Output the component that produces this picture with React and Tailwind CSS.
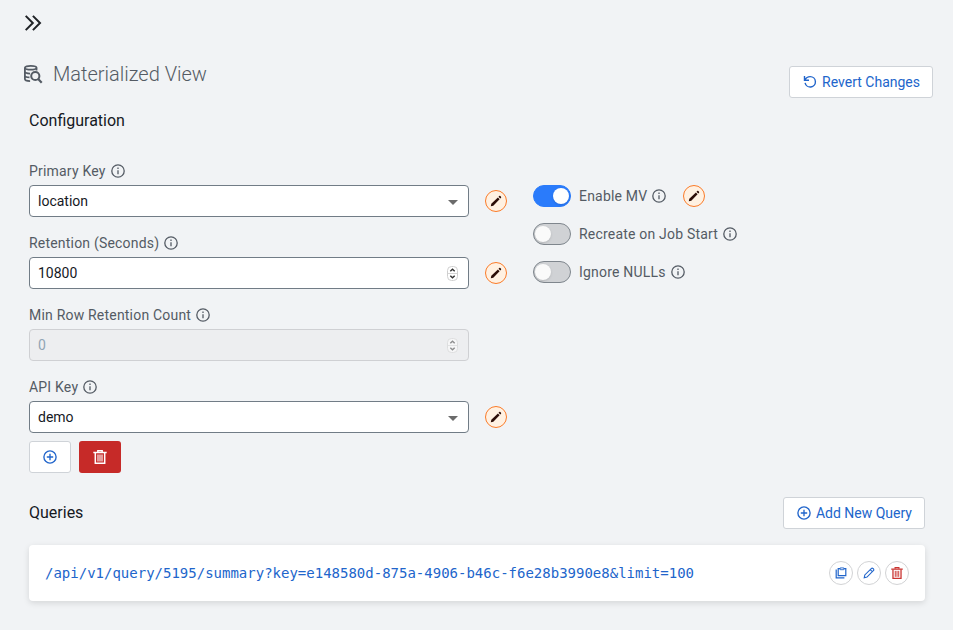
import React from "react";

function InfoIcon() {
  return (
    <svg width="14" height="14" viewBox="0 0 14 14" fill="none" stroke="#545b64" className="shrink-0">
      <circle cx="7" cy="7" r="6.2" strokeWidth="1.3" />
      <path d="M7 6.2v4M7 3.6v1.4" strokeWidth="1.3" />
    </svg>
  );
}

function Label({ children }) {
  return (
    <div className="flex h-5 items-center gap-[5px] text-sm leading-5 tracking-[0.2px] text-[#545b64]">
      <span>{children}</span>
      <InfoIcon />
    </div>
  );
}

function EditBadge() {
  return (
    <button className="flex size-[22px] shrink-0 items-center justify-center rounded-full border border-[#fb7b28] bg-[#fff1e2]">
      <svg width="12" height="12" viewBox="0 0 12 12" fill="#2b0d08">
        <path d="M.8 11.2l.5-2.5 6.6-6.2 1.7 1.7-6.3 6.5zM8.5 1.8l.8-.9c.8-.5 2.3.9 1.8 1.8l-.9.8z" />
      </svg>
    </button>
  );
}

function Caret() {
  return (
    <svg width="10" height="5" viewBox="0 0 10 5" fill="#6b6b6b" className="mt-0.5">
      <path d="M0 0h10L5 5z" />
    </svg>
  );
}

function Spinner({ muted }) {
  return (
    <svg width="11" height="15" viewBox="0 0 11 15" fill="none" className={muted ? "opacity-50" : ""}>
      <rect x=".5" y=".5" width="10" height="14" rx="4" fill="#fff" stroke="#cfcfcf" />
      <path d="M1 7.5h9" stroke="#d5d5d5" />
      <path d="M3.3 5.3l2.2-2.1 2.2 2.1M3.3 9.7l2.2 2.1 2.2-2.1" stroke="#333" strokeWidth="1.4" />
    </svg>
  );
}

function Field({ label, value, kind, disabled, edit }) {
  return (
    <div className="h-[72px]">
      <Label>{label}</Label>
      <div className="mt-1 flex items-center gap-4">
        <div
          className={
            "flex h-8 w-[440px] items-center justify-between rounded-[4px] border pr-[10px] pl-2 text-sm " +
            (disabled ? "border-[#cfd0d3] bg-[#edeef0] text-[#91a5b5]" : "border-[#717c86] bg-white text-[#16191f]")
          }
        >
          <span>{value}</span>
          {kind === "number" ? <Spinner muted={disabled} /> : <Caret />}
        </div>
        {edit && <EditBadge />}
      </div>
    </div>
  );
}

function Toggle({ label, on, edit }) {
  return (
    <div className="flex h-[22px] items-center">
      <div
        className={
          "mr-2 flex h-[22px] w-[38px] items-center rounded-full border " +
          (on ? "justify-end border-[#2a7bfb] bg-[#2a7bfb] pr-px" : "border-[#7f868d] bg-[#d0d2d5] pl-px")
        }
      >
        <span className={"size-4 rounded-full shadow-sm " + (on ? "bg-white" : "bg-[#fafafa]")} />
      </div>
      <Label>{label}</Label>
      {edit && (
        <div className="ml-[17px]">
          <EditBadge />
        </div>
      )}
    </div>
  );
}

function PlusCircle() {
  return (
    <svg width="14" height="14" viewBox="0 0 14 14" fill="none" stroke="#2165cb" strokeWidth="1.35">
      <circle cx="7" cy="7" r="6.1" />
      <path d="M7 3.8v6.4M3.8 7h6.4" />
    </svg>
  );
}

function Trash({ className }) {
  return (
    <svg width="14" height="14" viewBox="0 0 14 14" fill="none" stroke="currentColor" className={className}>
      <path d="M.3 2.5h13.4" strokeWidth="1.5" />
      <path d="M4.8 2V.8h4.4V2" strokeWidth="1.4" />
      <path d="M2.3 3v10.3h9.4V3" strokeWidth="1.5" />
      <path d="M5 4.5v7M7 4.5v7M9 4.5v7" strokeWidth="1.1" />
    </svg>
  );
}

const outlined = "flex h-8 items-center rounded-[3px] border border-[#cfd3d8] bg-white text-sm text-[#2165cb]";
const round = "flex size-6 items-center justify-center rounded-full border border-[#d2d3d5] bg-white";

export default function App() {
  return (
    <main className="h-[630px] w-[953px] overflow-hidden bg-[#f1f3f5] font-['Roboto',sans-serif] text-[#16191f]">
      <div className="h-[47px] pt-[15px] pl-[25px]">
        <svg width="17" height="16" viewBox="0 0 17 16" fill="none" stroke="#1f2226" strokeWidth="2">
          <path d="M.7.9L7.8 8 .7 15.1M7.9.9L15 8l-7.1 7.1" />
        </svg>
      </div>

      <header className="flex h-[59px] justify-between pr-5 pl-6">
        <div className="flex h-[54px] items-center">
          <svg width="19" height="19" viewBox="0 0 19 19" fill="none" stroke="#545b64" strokeWidth="1.8">
            <ellipse cx="6.7" cy="2.8" rx="5.8" ry="1.9" />
            <path d="M.9 2.8v11.3c0 1.2 2.3 2 5.2 2M12.5 2.8v2.7M.9 6.6c0 1 1.8 1.9 5.2 2M.9 10.4c0 .9 1.8 1.8 4.6 1.9" />
            <circle cx="11.3" cy="11" r="4.1" strokeWidth="2" />
            <path d="M14.2 14.1l3.5 3.6" strokeWidth="2.2" />
          </svg>
          <h1 className="ml-[10px] text-xl font-light text-[#545b64]">Materialized View</h1>
        </div>
        <button className={outlined + " mt-[19px] pr-3 pl-[13px]"}>
          <svg width="14" height="14" viewBox="0 0 14 14" fill="none" stroke="#2165cb" strokeWidth="1.4" className="mr-[5px]">
            <path d="M1.5 1v4.3H6M1.8 5C3 2.8 5 1.6 7.2 1.6a5.2 5.2 0 1 1-5.1 6.2" />
          </svg>
          Revert Changes
        </button>
      </header>

      <h2 className="mt-[3px] ml-[29px] text-base leading-6">Configuration</h2>

      <section className="mt-7 ml-[29px] flex h-[280px]">
        <div className="w-[504px]">
          <Field label="Primary Key" value="location" edit />
          <Field label="Retention (Seconds)" value="10800" kind="number" edit />
          <Field label="Min Row Retention Count" value="0" kind="number" disabled />
          <Field label="API Key" value="demo" edit />
        </div>
        <div className="flex flex-col gap-4 pt-6">
          <Toggle label="Enable MV" on edit />
          <Toggle label="Recreate on Job Start" />
          <Toggle label="Ignore NULLs" />
        </div>
      </section>

      <div className="ml-[29px] flex gap-2">
        <button className={outlined + " w-[42px] justify-center"}>
          <PlusCircle />
        </button>
        <button className="flex h-8 w-[42px] items-center justify-center rounded-[3px] bg-[#c62a28] text-white">
          <Trash />
        </button>
      </div>

      <div className="mt-6 mr-7 ml-[29px] flex h-8 items-center justify-between">
        <h2 className="text-base leading-6">Queries</h2>
        <button className={outlined + " gap-[5px] pr-3 pl-[13px]"}>
          <PlusCircle />
          Add New Query
        </button>
      </div>

      <div className="mt-4 mr-7 ml-[29px] flex h-14 items-center justify-between rounded-[4px] bg-white px-4 shadow-[0_2px_6px_rgba(0,0,0,0.12)]">
        <span className="font-['DejaVu_Sans_Mono',monospace] text-sm text-[#2165cb]">
          /api/v1/query/5195/summary?key=e148580d-875a-4906-b46c-f6e28b3990e8&amp;limit=100
        </span>
        <div className="flex gap-1">
          <button className={round}>
            <svg width="12" height="12" viewBox="0 0 12 12" fill="none" stroke="#2165cb" strokeWidth="1.2">
              <path d="M5 1.6H3.2v7h7.6v-7H9" />
              <path d="M5.2.9h3.6v1.8H5.2z" strokeWidth=".9" />
              <path d="M1.2 2.6v8.2h8.2" />
            </svg>
          </button>
          <button className={round}>
            <svg width="12" height="12" viewBox="0 0 12 12" fill="none" stroke="#2165cb" strokeWidth="1.1">
              <path d="M1.2 10.8l.6-2.9 6.7-6.6c.9-.8 3 1.2 2.1 2.1L4 10.1zM7.2 2.6l2.1 2.1" />
            </svg>
          </button>
          <button className={round + " text-[#ca3431]"}>
            <Trash className="size-3" />
          </button>
        </div>
      </div>
    </main>
  );
}
